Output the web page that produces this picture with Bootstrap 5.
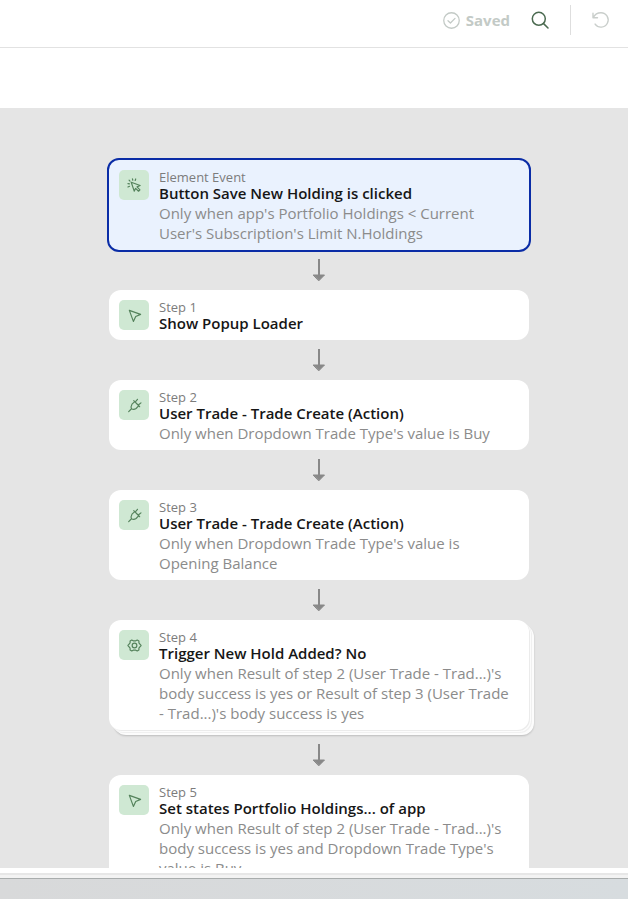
<!DOCTYPE html>
<html lang="en">
<head>
<meta charset="utf-8">
<meta name="viewport" content="width=device-width, initial-scale=1">
<title>Workflow editor</title>
<link href="https://cdn.jsdelivr.net/npm/bootstrap@5.3.0/dist/css/bootstrap.min.css" rel="stylesheet">
<style>
body { font-family: "Open Sans", "Noto Sans", sans-serif; background: #fff; }
.topbar { padding: 5px 17px 12px; border-bottom: 1px solid #e2e2e2; }
.topbar .saved { color: #c3cac6; font-size: 15px; line-height: 20px; font-weight: 700; gap: 6px; margin-right: 20px; }
.topbar .tool { width: 20px; height: 30px; color: #4b6a50; }
.topbar .tool:disabled { color: #c9cecb; opacity: 1; border: 0; }
.topbar .split { width: 1px; height: 30px; background: #dedede; margin: 0 20px; }
.subbar { height: 60px; }
.flow-canvas { background: #e5e5e5; padding: 50px 0 0 10px; min-height: 0; }
.step { width: 420px; max-width: calc(100% - 20px); min-height: 50px; background: #fff; border-radius: 12px; padding: 9px 18px 7px 10px; gap: 10px; }
.step.chosen { width: 424px; background: #eaf2fe; border: 2px solid #0a2ca6; }
.step-icon { width: 30px; height: 30px; margin-top: 1px; border-radius: 5px; background: #cfe8d3; color: #54825b; stroke-width: 1.25; }
.step-kind { font-size: 13px; line-height: 16px; font-weight: 500; color: #7c7c7c; }
.step-name { font-size: 15px; line-height: 16px; font-weight: 600; color: #161616; }
.step-rule { font-size: 15px; line-height: 20px; margin-top: 2px; color: #8b8b8b; }
.stacked { box-shadow: 1px 1px 0 #ebebeb, 2px 2px 0 #fcfcfc, 3px 3px 0 #f0f0f0, 4px 4px 0 #fcfcfc, 5px 5px 0 #fcfcfc, 5px 6px 2px rgba(0,0,0,.18); margin-bottom: 5px; }
.link-arrow { height: 40px; padding-top: 8px; color: #888; line-height: 0; }
.first-arrow { height: 38px; padding-top: 6px; }
.scroll-edge { height: 11px; background: #f3f3f3; border-top: 5px solid #fff; border-bottom: 1px solid #a9adad; box-shadow: inset 0 2px 0 #e7e7e7; }
.desk-strip { height: 20px; background: linear-gradient(90deg, #d8d9da, #d7dcdf); }
svg { fill: none; stroke: currentColor; stroke-linecap: round; stroke-linejoin: round; }
</style>
<script src="https://cdn.jsdelivr.net/npm/bootstrap@5.3.0/dist/js/bootstrap.bundle.min.js"></script>
</head>
<body>
<svg class="d-none" aria-hidden="true">
  <symbol id="i-click" viewBox="0 0 16 16"><path d="M4.5 4.5 14 8l-3.3 1.5 3.1 3.1-1.5 1.5-3.1-3.1L7.7 14zM5.8.9 6.2 2.4M9.3 1 8.7 2.6M1 6l1.6.3M1 9.6l1.7-.8M2.2 2.3l1 1"/></symbol>
  <symbol id="i-pointer" viewBox="0 0 16 16"><path d="M2.5 2.5 14.5 6.8 9.3 9 6.8 14.3z"/></symbol>
  <symbol id="i-plug" viewBox="0 0 16 16"><path d="M1.8 14.5 4.8 11.5M8.3 3.9 5.3 6.6Q3.8 9.2 4.8 11.5 7.2 12.9 9.7 11.2L12.6 8.2M7.2 2.8 13.5 9.3M8.3 3.9 12.6 8.2M9.1 3.9 11.2 1.4M12.4 7.2 14.9 5.2"/></symbol>
  <symbol id="i-gear" viewBox="0 0 16 16"><path d="M5.1 2.2 6.6 3h2.8l1.5-.8 1.8 1v2L14 6.8l1 1.2-1 1.2-1.3 1.6v2l-1.8 1-1.5-.8H6.6l-1.5.8-1.8-1v-2L2 9.2 1 8l1-1.2 1.3-1.6v-2z"/><circle cx="8" cy="8" r="2.5"/></symbol>
  <symbol id="i-down" viewBox="0 0 14 24"><path d="M7 1v17" stroke-width="2" stroke-linecap="butt"/><path d="M1.5 17h11L7 22.6z" fill="currentColor" stroke-width="1"/></symbol>
</svg>
<div class="d-flex flex-column vh-100 overflow-hidden">
  <header class="topbar d-flex align-items-center justify-content-end">
    <div class="saved d-flex align-items-center">
      <svg width="17" height="17" viewBox="0 0 16 16" stroke-width="1.2" aria-hidden="true"><circle cx="8" cy="8" r="7.3"/><path d="M4.7 8.2 7 10.4 11.3 6"/></svg>
      <span>Saved</span>
    </div>
    <button type="button" class="tool btn p-0 border-0 d-flex align-items-center justify-content-center" aria-label="Search"><svg width="18" height="18" viewBox="0 0 18 18" stroke-width="1.5"><circle cx="7.8" cy="7.8" r="6.5"/><path d="M12.6 12.6 17 17"/></svg></button>
    <div class="split"></div>
    <button type="button" class="tool btn p-0 border-0 d-flex align-items-center justify-content-center" aria-label="Undo" disabled><svg width="18" height="18" viewBox="0 0 18 18" stroke-width="1.4"><path d="M1 2.2v4.5H5.5M1.3 6.5C2.8 3.4 5.7 1.7 9 1.7a7.2 7.2 0 1 1-5.9 11.4"/></svg></button>
  </header>
  <div class="subbar flex-shrink-0"></div>
  <main class="flow-canvas flex-grow-1 overflow-hidden d-flex flex-column align-items-center">
    <section class="step chosen d-flex align-items-start flex-shrink-0">
      <span class="step-icon d-flex align-items-center justify-content-center flex-shrink-0"><svg width="15" height="15"><use href="#i-click"/></svg></span>
      <div><div class="step-kind">Element Event</div><div class="step-name">Button Save New Holding is clicked</div><div class="step-rule">Only when app's Portfolio Holdings &lt; Current User's Subscription's Limit N.Holdings</div></div>
    </section>
    <div class="link-arrow first-arrow flex-shrink-0"><svg width="14" height="24"><use href="#i-down"/></svg></div>
    <section class="step d-flex align-items-start flex-shrink-0">
      <span class="step-icon d-flex align-items-center justify-content-center flex-shrink-0"><svg width="15" height="15"><use href="#i-pointer"/></svg></span>
      <div><div class="step-kind">Step 1</div><div class="step-name">Show Popup Loader</div></div>
    </section>
    <div class="link-arrow flex-shrink-0"><svg width="14" height="24"><use href="#i-down"/></svg></div>
    <section class="step d-flex align-items-start flex-shrink-0">
      <span class="step-icon d-flex align-items-center justify-content-center flex-shrink-0"><svg width="15" height="15"><use href="#i-plug"/></svg></span>
      <div><div class="step-kind">Step 2</div><div class="step-name">User Trade - Trade Create (Action)</div><div class="step-rule">Only when Dropdown Trade Type's value is Buy</div></div>
    </section>
    <div class="link-arrow flex-shrink-0"><svg width="14" height="24"><use href="#i-down"/></svg></div>
    <section class="step d-flex align-items-start flex-shrink-0">
      <span class="step-icon d-flex align-items-center justify-content-center flex-shrink-0"><svg width="15" height="15"><use href="#i-plug"/></svg></span>
      <div><div class="step-kind">Step 3</div><div class="step-name">User Trade - Trade Create (Action)</div><div class="step-rule">Only when Dropdown Trade Type's value is Opening Balance</div></div>
    </section>
    <div class="link-arrow flex-shrink-0"><svg width="14" height="24"><use href="#i-down"/></svg></div>
    <section class="step stacked d-flex align-items-start flex-shrink-0">
      <span class="step-icon d-flex align-items-center justify-content-center flex-shrink-0"><svg width="15" height="15"><use href="#i-gear"/></svg></span>
      <div><div class="step-kind">Step 4</div><div class="step-name">Trigger New Hold Added? No</div><div class="step-rule">Only when Result of step 2 (User Trade - Trad...)'s body success is yes or Result of step 3 (User Trade - Trad...)'s body success is yes</div></div>
    </section>
    <div class="link-arrow flex-shrink-0"><svg width="14" height="24"><use href="#i-down"/></svg></div>
    <section class="step d-flex align-items-start flex-shrink-0">
      <span class="step-icon d-flex align-items-center justify-content-center flex-shrink-0"><svg width="15" height="15"><use href="#i-pointer"/></svg></span>
      <div><div class="step-kind">Step 5</div><div class="step-name">Set states Portfolio Holdings... of app</div><div class="step-rule">Only when Result of step 2 (User Trade - Trad...)'s body success is yes and Dropdown Trade Type's value is Buy</div></div>
    </section>
  </main>
  <div class="scroll-edge flex-shrink-0"></div>
  <footer class="desk-strip flex-shrink-0"></footer>
</div>
</body>
</html>
